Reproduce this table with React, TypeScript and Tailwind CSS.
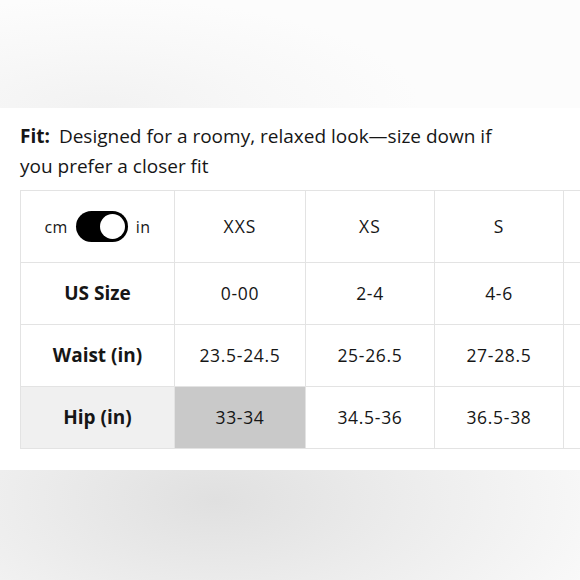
import React from 'react';

const sizes = ['XXS', 'XS', 'S', ''];

const rows = [
  { label: 'US Size', values: ['0-00', '2-4', '4-6', ''] },
  { label: 'Waist (in)', values: ['23.5-24.5', '25-26.5', '27-28.5', ''] },
  { label: 'Hip (in)', values: ['33-34', '34.5-36', '36.5-38', ''], shaded: true },
];

const Toggle = () => (
  <div className="flex items-center gap-[8px] text-[16px] tracking-[0.03em]">
    <span>cm</span>
    <div className="w-[52px] h-[31px] rounded-full bg-black flex items-center justify-end pr-[3px]">
      <div className="w-[25px] h-[25px] rounded-full bg-white" />
    </div>
    <span>in</span>
  </div>
);

const App = () => {
  return (
    <div
      className="w-[580px] h-[580px] overflow-hidden flex flex-col text-[#161616]"
      style={{ fontFamily: '"Open Sans", Lato, sans-serif' }}
    >
      <div className="h-[108px] bg-[radial-gradient(ellipse_320px_110px_at_100px_108px,#f2f2f2,#f8f8f8_55%,#fcfcfc)]" />

      <div className="h-[362px] bg-white pl-[20px]">
        <p className="mt-[13px] text-[19px] leading-[30px] w-[490px]">
          <span className="font-bold mr-[9px]">Fit:</span>Designed for a roomy, relaxed look—size down if you prefer a closer fit
        </p>

        {/* size chart */}
        <div className="mt-[9px] w-[700px] grid grid-cols-[154px_131px_129px_129px_129px] grid-rows-[72px_62px_62px_62px] border-l border-t border-[#e3e3e3]">
          <div className="border-r border-b border-[#e3e3e3] flex items-center justify-center">
            <Toggle />
          </div>
          {sizes.map((s, i) => (
            <div key={i} className="border-r border-b border-[#e3e3e3] flex items-center justify-center text-[17.5px] tracking-[0.06em]">
              {s}
            </div>
          ))}

          {rows.map(row => (
            <React.Fragment key={row.label}>
              <div
                className={`border-r border-b border-[#e3e3e3] flex items-center justify-center text-[19px] font-bold ${row.shaded ? 'bg-[#f0f0f0]' : ''}`}
              >
                {row.label}
              </div>
              {row.values.map((v, i) => (
                <div
                  key={i}
                  className={`border-r border-b border-[#e3e3e3] flex items-center justify-center text-[17.5px] tracking-[0.04em] ${row.shaded && i === 0 ? 'bg-[#c9c9c9]' : ''}`}
                >
                  {v}
                </div>
              ))}
            </React.Fragment>
          ))}
        </div>
      </div>

      <div className="flex-1 bg-[radial-gradient(ellipse_420px_200px_at_215px_30px,#e0e0e0,#ececec_45%,#fafafa)]" />
    </div>
  );
};

export default App;
